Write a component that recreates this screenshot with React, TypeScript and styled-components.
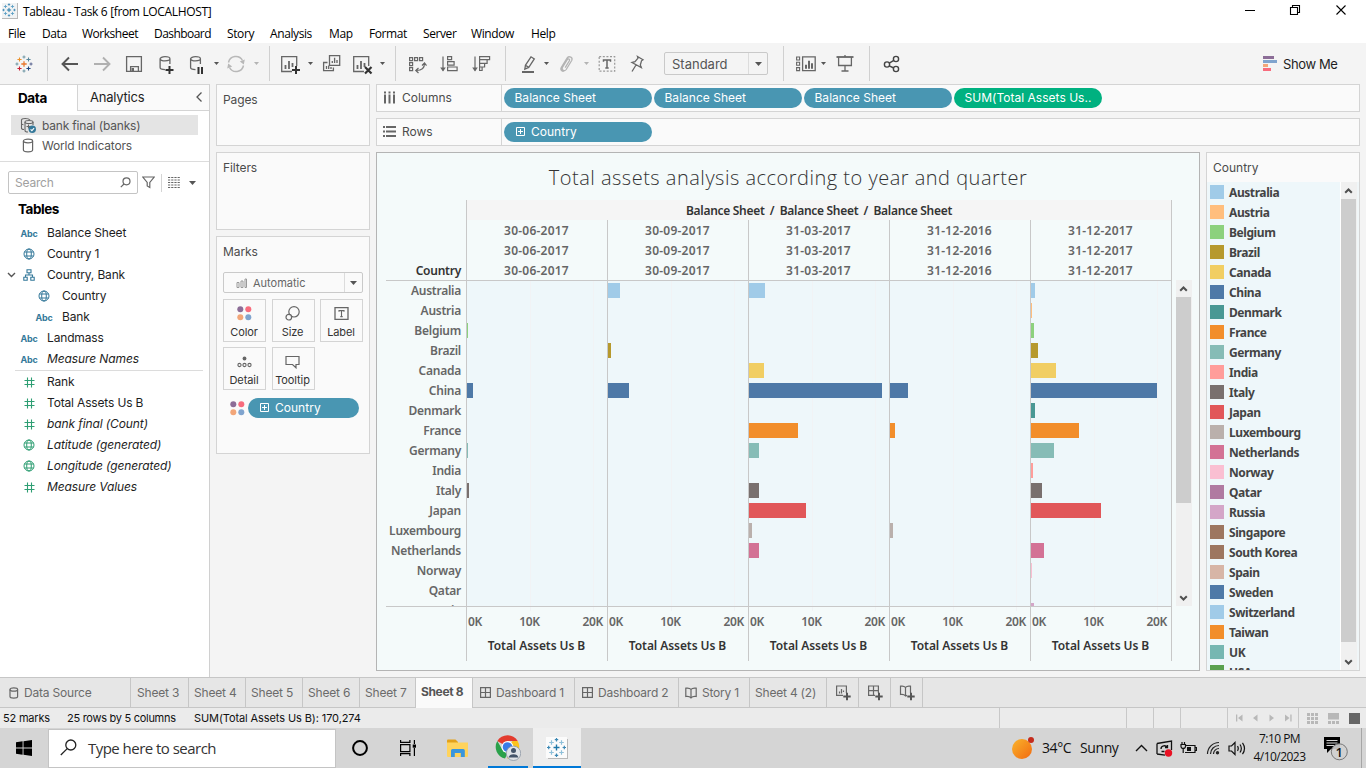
import React from 'react';
import styled, { createGlobalStyle, css } from 'styled-components';

const UI = '"Inter", "Liberation Sans", sans-serif';
const SEGOE = '"Open Sans", "Noto Sans", sans-serif';
const CHART = '"Noto Sans", "Open Sans", sans-serif';

const GlobalStyle = createGlobalStyle`
  * { box-sizing: border-box; }
  body { margin: 0; background: #f4f4f4; overflow: hidden; }
  svg { display: block; flex: none; }
`;

const Screen = styled.div`
  width: 1366px;
  height: 768px;
  display: flex;
  flex-direction: column;
  overflow: hidden;
  background: #f4f4f4;
  font-family: ${UI};
  font-size: 12px;
  color: #4b4b4b;
  white-space: pre;
`;

/* ---------- title bar and menu ---------- */

const TitleBar = styled.header`
  height: 23px;
  display: flex;
  align-items: center;
  padding-left: 2px;
  background: #fff;
  font-family: ${SEGOE};
  font-size: 12px;
  letter-spacing: -0.34px;
  color: #000;
`;

const AppBadge = styled.span`
  width: 16px;
  height: 16px;
  margin: -1px 5px 0 0;
  background: #f1f3f4;
  border-right: 1px solid #b9b9b9;
  border-bottom: 1px solid #b9b9b9;
`;

const WindowButtons = styled.div`
  display: flex;
  margin-left: auto;
  padding-right: 1px;
`;

const WindowButton = styled.div<{ $w: number }>`
  width: ${(p) => p.$w}px;
  height: 23px;
  padding-bottom: 3px;
  display: flex;
  align-items: center;
  justify-content: center;
`;

const MenuBar = styled.nav`
  height: 20px;
  display: flex;
  padding-left: 8px;
  background: #fff;
  font-family: ${SEGOE};
  font-size: 12px;
  line-height: 21px;
  color: #000;
`;

const MenuItem = styled.span<{ $w: number; $ls?: number }>`
  width: ${(p) => p.$w}px;
  letter-spacing: ${(p) => p.$ls ?? -0.4}px;
`;

/* ---------- toolbar ---------- */

const Toolbar = styled.div`
  height: 41px;
  display: flex;
  align-items: center;
  background: #f4f4f4;
`;

const Tool = styled.div<{ $w: number; $ml?: number }>`
  width: ${(p) => p.$w}px;
  margin-left: ${(p) => p.$ml ?? 0}px;
  flex: none;
  display: flex;
  justify-content: center;
`;

const ToolSeparator = styled.i<{ $ml?: number }>`
  width: 1px;
  height: 35px;
  margin-left: ${(p) => p.$ml ?? 0}px;
  background: #d0d0d0;
  flex: none;
`;

const FitSelect = styled.div`
  width: 104px;
  height: 23px;
  margin-left: 12px;
  display: flex;
  align-items: center;
  flex: none;
  border: 1px solid #c9c9c9;
  border-radius: 2px;
  padding-left: 7px;
  font-size: 13px;
  color: #555;
`;

const SelectArrow = styled.span<{ $w: number }>`
  width: ${(p) => p.$w}px;
  height: 100%;
  margin-left: auto;
  display: flex;
  align-items: center;
  justify-content: center;
  border-left: 1px solid #dcdcdc;
`;

const ShowMe = styled.div`
  margin-left: auto;
  width: 103px;
  display: flex;
  align-items: center;
  gap: 6px;
  font-size: 13px;
  letter-spacing: -0.4px;
  color: #1e1e1e;
`;

/* ---------- workspace ---------- */

const Workspace = styled.main`
  height: 593px;
  display: flex;
`;

const DataPane = styled.aside`
  width: 210px;
  display: flex;
  flex-direction: column;
  background: #fff;
  border-right: 1px solid #d0d0d0;
  border-top: 1px solid #d4d4d4;
  color: #1e1e1e;
`;

const PaneTabs = styled.div`
  display: flex;
  height: 26px;
  font-size: 13px;
`;

const PaneTab = styled.div<{ $active?: boolean }>`
  display: flex;
  align-items: center;
  ${(p) =>
    p.$active
      ? css`
          width: 77px;
          padding: 0 0 1px 18px;
          font-weight: 700;
          font-size: 13.5px;
          letter-spacing: -0.4px;
          color: #000;
        `
      : css`
          flex: 1;
          padding: 0 6px 1px 12px;
          letter-spacing: -0.22px;
          background: #fafafa;
          border-left: 1px solid #d4d4d4;
          border-bottom: 1px solid #d4d4d4;
          justify-content: space-between;
        `}
`;

const SourceList = styled.div`
  padding: 4px 11px 6px;
  border-bottom: 1px solid #dcdcdc;
`;

const Source = styled.div<{ $selected?: boolean }>`
  height: 20px;
  display: flex;
  align-items: center;
  gap: 6px;
  padding-left: 9px;
  letter-spacing: -0.18px;
  color: #555;
  background: ${(p) => (p.$selected ? '#e4e4e4' : 'transparent')};
`;

const SearchLine = styled.div`
  display: flex;
  align-items: center;
  margin: 9px 0 0 8px;
`;

const FieldSearch = styled.div`
  width: 130px;
  height: 23px;
  display: flex;
  align-items: center;
  justify-content: space-between;
  padding: 0 6px;
  border: 1px solid #c4c4c4;
  border-radius: 2px;
  color: #a0a0a0;
  letter-spacing: -0.2px;
`;

const SearchDivider = styled.i`
  width: 1px;
  height: 18px;
  margin: 0 6px;
  background: #d4d4d4;
`;

const TablesHeading = styled.h2`
  margin: 6px 0 3px 18px;
  font-size: 13.5px;
  line-height: 19px;
  letter-spacing: -0.45px;
  color: #000;
`;

const Field = styled.div<{ $nested?: boolean; $italic?: boolean }>`
  height: 21px;
  display: flex;
  align-items: center;
  padding-left: ${(p) => (p.$nested ? 20 : 5)}px;
  font-style: ${(p) => (p.$italic ? 'italic' : 'normal')};
  letter-spacing: ${(p) => (p.$italic ? -0.1 : -0.16)}px;
`;

const Expander = styled.span`
  width: 12px;
`;

const FieldIcon = styled.span<{ $measure?: boolean }>`
  width: 24px;
  margin-right: 6px;
  padding-top: 1px;
  display: flex;
  justify-content: center;
  font-style: normal;
  color: ${(p) => (p.$measure ? '#2e9e73' : '#35799a')};
`;

const AbcMark = styled.b`
  font-size: 9px;
  letter-spacing: -0.3px;
`;

const FieldDivider = styled.hr`
  width: 188px;
  height: 1px;
  margin: 1px 0 0 15px;
  border: 0;
  background: #dcdcdc;
`;

/* ---------- cards ---------- */

const CardColumn = styled.section`
  width: 154px;
  margin-left: 6px;
  display: flex;
  flex-direction: column;
  gap: 6px;
`;

const Card = styled.div<{ $h: number }>`
  height: ${(p) => p.$h}px;
  padding: 5px 6px;
  background: #fafafa;
  border: 1px solid #d4d4d4;
`;

const CardTitle = styled.div`
  line-height: 20px;
  letter-spacing: -0.1px;
`;

const MarkType = styled.div`
  width: 140px;
  height: 21px;
  margin-top: 10px;
  display: flex;
  align-items: center;
  padding-left: 12px;
  gap: 6px;
  border: 1px solid #cacaca;
  border-radius: 2px;
  font-size: 11px;
  color: #666;
`;

const MarkGrid = styled.div`
  display: grid;
  grid-template-columns: 43px 43px 43px;
  column-gap: 5.5px;
  row-gap: 5px;
  margin-top: 6px;
`;

const MarkButton = styled.div`
  height: 43px;
  display: flex;
  flex-direction: column;
  align-items: center;
  justify-content: space-between;
  padding: 6px 1px 1px 0;
  border: 1px solid #d4d4d4;
  font-size: 11px;
  line-height: 16px;
  letter-spacing: -0.1px;
  color: #333;
`;

const MarkPillRow = styled.div`
  display: flex;
  align-items: center;
  gap: 3px;
  margin: 8px 0 0 7px;
`;

const Pill = styled.div<{ $w: number; $measure?: boolean; $pad?: number }>`
  width: ${(p) => p.$w}px;
  height: 20px;
  flex: none;
  display: flex;
  align-items: center;
  gap: 6px;
  padding-left: ${(p) => p.$pad ?? 10.5}px;
  border-radius: 10px;
  background: ${(p) => (p.$measure ? '#00b180' : '#4996b2')};
  color: #fff;
  line-height: 14px;
  padding-bottom: 1px;
  letter-spacing: 0.02px;
`;

/* ---------- shelves, view, legend ---------- */

const ViewColumn = styled.section`
  width: 984px;
  margin-left: 6px;
  display: flex;
  flex-direction: column;
  gap: 6px;
`;

const Shelf = styled.div`
  height: 28px;
  flex: none;
  display: flex;
  align-items: center;
  gap: 2px;
  background: #fafafa;
  border: 1px solid #d4d4d4;
`;

const ShelfLabel = styled.div`
  width: 125px;
  height: 100%;
  display: flex;
  align-items: center;
  gap: 6px;
  padding: 0 0 1px 6px;
  border-right: 1px solid #d4d4d4;
`;

const ViewRow = styled.div`
  display: flex;
  gap: 6px;
  height: 519px;
`;

const Viz = styled.div`
  width: 824px;
  padding-left: 9px;
  background: #f4fafa;
  border: 1px solid #b4b4b4;
  font-family: ${CHART};
  font-weight: 600;
  color: #666;
`;

const VizTitle = styled.h1`
  height: 47px;
  margin: 0 0 0 -9px;
  font: 300 20px/50px "Open Sans", "Noto Sans", sans-serif;
  letter-spacing: 0.5px;
  text-align: center;
  color: #333;
`;

const ChartRow = styled.div`
  display: flex;
`;

const RowLabels = styled.div`
  width: 80px;
  padding-right: 5px;
  text-align: right;
  letter-spacing: -0.25px;
  line-height: 20px;
`;

const CornerLabel = styled(RowLabels)`
  padding-top: 61px;
  height: 80px;
  color: #333;
`;

const HeaderBlock = styled.div`
  width: 706px;
  border: solid #c8c8c8;
  border-width: 0 1px;
`;

const HeaderBand = styled.div`
  height: 20px;
  line-height: 21px;
  background: #f5f5f5;
  text-align: center;
  word-spacing: -0.2px;
  letter-spacing: -0.27px;
  color: #333;
`;

const Columns = styled.div`
  display: flex;
`;

const Column = styled.div`
  width: 141px;
  border-right: 1px solid #c8c8c8;
  &:last-child { width: 140px; border-right: 0; }
`;

const DateCell = styled.div`
  width: 139px;
  height: 20px;
  line-height: 22px;
  text-align: center;
  letter-spacing: 0.22px;
`;

const PlotRow = styled.div`
  display: flex;
  gap: 4px;
`;

const PlotFrame = styled.div`
  width: 786px;
  height: 327px;
  display: flex;
  overflow: hidden;
  border: solid #c8c8c8;
  border-width: 1px 0;
`;

const PlotBlock = styled.div`
  width: 706px;
  height: 325px;
  display: flex;
  border: solid #c8c8c8;
  border-width: 0 1px;
  background: #eef7fa;
`;

const gridlines = css`
  background-image: linear-gradient(#f1f3f5, #f1f3f5), linear-gradient(#f1f3f5, #f1f3f5);
  background-position: 63px 0, 126px 0;
  background-repeat: no-repeat;
`;

const PlotColumn = styled(Column)`
  height: 325px;
  padding-top: 2px;
  overflow: hidden;
  ${gridlines}
  background-size: 1px 100%;
`;

const BarSlot = styled.div`
  height: 20px;
`;

const Bar = styled.div<{ $color: string }>`
  height: 15px;
  background: ${(p) => p.$color};
`;

const Track = styled.div<{ $h: number }>`
  width: 16px;
  height: ${(p) => p.$h}px;
  flex: none;
  display: flex;
  flex-direction: column;
  justify-content: space-between;
  background: #f0f0f0;
`;

const TrackButton = styled.span`
  width: 15px;
  height: 17px;
  display: flex;
  align-items: center;
  justify-content: center;
`;

const Thumb = styled.span<{ $h: number }>`
  width: 15px;
  height: ${(p) => p.$h}px;
  margin-bottom: auto;
  background: #cdcdcd;
`;

const AxisColumn = styled(Column)`
  height: 54px;
  padding-top: 5px;
  ${gridlines}
  background-size: 1px 4px;
`;

const AxisTicks = styled.div`
  width: 140px;
  display: grid;
  grid-template-columns: 31px 63px 45px;
  line-height: 20px;
  letter-spacing: -0.3px;
  span:first-child { padding-left: 1px; }
  span:nth-child(2) { text-align: center; }
  span:last-child { text-align: right; padding-right: 3px; }
`;

const AxisTitle = styled.div`
  width: 139px;
  margin-top: 4px;
  text-align: center;
  line-height: 20px;
  letter-spacing: -0.07px;
  color: #333;
`;

const Legend = styled.aside`
  width: 154px;
  overflow: hidden;
  background: #fafafa;
  border: 1px solid #d4d4d4;
`;

const LegendTitle = styled.div`
  height: 29px;
  padding-left: 6px;
  line-height: 30px;
`;

const LegendBody = styled.div`
  display: flex;
  height: 488px;
  background: #f0f6f8;
`;

const LegendList = styled.div`
  width: 134px;
  overflow: hidden;
  background: #eef7fa;
  border-right: 1px solid #fff;
  padding-left: 3px;
`;

const LegendItem = styled.div`
  height: 20px;
  display: flex;
  align-items: center;
  gap: 5px;
  font: 700 12px/20px ${CHART};
  letter-spacing: -0.42px;
  color: #444;
`;

const LegendName = styled.span`
  padding-top: 2px;
`;

const Swatch = styled.i<{ $color: string }>`
  width: 14px;
  height: 14px;
  background: ${(p) => p.$color};
`;

/* ---------- sheet tabs and status ---------- */

const SheetTabs = styled.div`
  height: 31px;
  display: flex;
  background: #e6e6e6;
  border: solid #c6c6c6;
  border-width: 1px 0;
`;

const SheetTab = styled.div<{ $w: number; $active?: boolean; $pad?: number }>`
  width: ${(p) => p.$w}px;
  height: ${(p) => (p.$active ? 30 : 29)}px;
  display: flex;
  align-items: center;
  gap: 5px;
  padding-left: ${(p) => p.$pad ?? 6}px;
  border-right: 1px solid #c6c6c6;
  letter-spacing: -0.2px;
  color: #6b6b6b;
  ${(p) =>
    p.$active &&
    css`
      background: #fafafa;
      font-weight: 700;
      letter-spacing: -0.36px;
      padding-bottom: 3px;
      color: #555;
    `}
`;

const StatusBar = styled.div`
  height: 20px;
  display: flex;
  align-items: center;
  padding-left: 3px;
  background: #ebebeb;
  font-size: 11px;
  color: #111;
`;

const StatusText = styled.span<{ $w: number; $ls: number }>`
  width: ${(p) => p.$w}px;
  letter-spacing: ${(p) => p.$ls}px;
`;

const StatusCell = styled.div<{ $w: number }>`
  width: ${(p) => p.$w}px;
  height: 100%;
  display: flex;
  align-items: center;
  border-left: 1px solid #c8c8c8;
`;

/* ---------- taskbar ---------- */

const Taskbar = styled.footer`
  height: 40px;
  display: flex;
  align-items: center;
  background: #d5d5d5;
  font-family: ${SEGOE};
  color: #111;
`;

const TaskItem = styled.div<{ $w: number; $ml?: number; $active?: boolean; $open?: boolean }>`
  width: ${(p) => p.$w}px;
  height: 40px;
  flex: none;
  margin-left: ${(p) => p.$ml ?? 0}px;
  display: flex;
  align-items: center;
  justify-content: center;
  background: ${(p) => (p.$active ? '#eeeeee' : 'transparent')};
  box-shadow: ${(p) => (p.$open ? 'inset 0 -2px 0 #0078d7' : 'none')};
`;

const TaskSearch = styled.div`
  width: 288px;
  height: 39px;
  margin-top: 1px;
  display: flex;
  align-items: center;
  gap: 11px;
  padding: 0 0 2px 11px;
  background: #fff;
  border: 1px solid #c4c4c4;
  font-size: 15px;
  letter-spacing: -0.53px;
  color: #333;
`;

const Weather = styled.div`
  margin-left: auto;
  display: flex;
  align-items: center;
  width: 119px;
  padding-bottom: 1px;
  font-size: 14px;
  letter-spacing: -0.4px;
`;

const Temperature = styled.span`
  width: 38px;
  margin-left: 7px;
`;

const Clock = styled.div`
  width: 63px;
  margin-left: 0;
  font-size: 12px;
  line-height: 18px;
  letter-spacing: -0.53px;
  text-align: center;
`;

const DesktopEdge = styled.i`
  width: 5px;
  height: 40px;
  border-left: 1px solid #a6a6a6;
`;

/* ---------- icons ---------- */

const Glyph = ({ size = 24, w, h, children, ...rest }: any) => (
  <svg
    width={w ?? size}
    height={h ?? size}
    viewBox={`0 0 ${w ?? size} ${h ?? size}`}
    fill="none"
    stroke="#666"
    strokeWidth="1.3"
    {...rest}
  >
    {children}
  </svg>
);

const plus = (x: number, y: number, r: number) => `M${x - r} ${y}h${2 * r}M${x} ${y - r}v${2 * r}`;

const TableauMark = ({ size, colors }: { size: number; colors: string[] }) => (
  <svg width={size} height={size} viewBox="0 0 20 20" fill="none" strokeWidth="1.2">
    <path stroke={colors[0]} strokeWidth="1.4" d={plus(10, 10, 3)} />
    <path stroke={colors[1]} d={plus(5, 5, 2.3)} />
    <path stroke={colors[2]} d={plus(15, 5, 2.3)} />
    <path stroke={colors[3]} d={plus(5, 15, 2.3)} />
    <path stroke={colors[4]} d={plus(15, 15, 2.3)} />
    <path stroke={colors[5]} d={plus(10, 2.2, 1.7)} />
    <path stroke={colors[6]} d={plus(2.2, 10, 1.7)} />
    <path stroke={colors[5]} d={plus(10, 17.8, 1.7)} />
    <path stroke={colors[7]} d={plus(17.8, 10, 1.7)} />
  </svg>
);

const BRAND = ['#e8762d', '#eb912b', '#59879b', '#c72035', '#1f447e', '#7199a6', '#7199a6', '#5c6692'];
const BLUES = ['#1f77a8', '#5a9fc4', '#5a9fc4', '#5a9fc4', '#5a9fc4', '#3b88b4', '#3b88b4', '#3b88b4'];
const PALE_BLUES = ['#1f77a8', '#8dbfd9', '#8dbfd9', '#8dbfd9', '#8dbfd9', '#3b88b4', '#3b88b4', '#3b88b4'];

const Caret = ({ light, big }: { light?: boolean; big?: boolean }) => (
  <svg width={big ? 7 : 5} height={big ? 4 : 3} viewBox="0 0 6 3" preserveAspectRatio="none">
    <path d="M0 0h6L3 3z" fill={light ? '#b4b4b4' : '#555'} />
  </svg>
);

const Cylinder = ({ x = 0, y = 0 }: { x?: number; y?: number }) => (
  <path
    transform={`translate(${x} ${y})`}
    d="M.6 2.8C.6 1.6 2.8.7 5.5.7s4.9.9 4.9 2.1-2.200 2.100-4.900 2.100S.6 4 .6 2.800V11.500c0 1.200 2.200 2.100 4.900 2.100M10.400 2.800V8"
  />
);

const DataPlus = () => (
  <Glyph>
    <Cylinder x={5.5} y={4} />
    <path stroke="#333" strokeWidth="2" d={plus(15.5, 18, 4)} />
  </Glyph>
);

const DataPause = () => (
  <Glyph>
    <Cylinder x={6} y={4} />
    <path stroke="#333" strokeWidth="2" d="M14.500 15v7M18 15v7" />
  </Glyph>
);

const ChartFrame = () => (
  <>
    <path d="M14 19.500H3.700V4.700h15V14" />
    <path strokeWidth="1.800" d="M7.500 17v-4M11 17V9M14.500 15v-4" />
  </>
);

const NewSheet = () => (
  <Glyph>
    <ChartFrame />
    <path stroke="#333" strokeWidth="2" d={plus(18, 18, 4)} />
  </Glyph>
);

const ClearSheet = () => (
  <Glyph>
    <ChartFrame />
    <path stroke="#333" strokeWidth="2.200" d="M15 15l6.500 6.500M21.500 15L15 21.500" />
  </Glyph>
);

const DuplicateSheet = () => (
  <Glyph>
    <path d="M9.500 3.600h10.200v9.800H9.500zM7.500 10.500H3.600v8.200h9.800V15.500" />
    <path d="M12.300 11V9M14.600 11V5.800M17 11V8M6.500 17v-3M8.700 17v-3.500M11 17v-2" />
  </Glyph>
);

const Swap = () => (
  <Glyph strokeWidth="1.200">
    <path d="M4.600 5.600h3v3h-3zM9.600 5.600h3v3h-3zM14.600 5.600h3v3h-3zM4.600 10.600h3v3h-3zM4.600 15.600h3v3h-3z" />
    <path d="M19.500 11.500c0 4-2.500 7-8 7M17 13.500l2.500-2.500 2 2.700M13.500 16l-2.700 2.500 2.700 2.500" />
  </Glyph>
);

const Sort = ({ desc }: { desc?: boolean }) => (
  <Glyph strokeWidth="1.200">
    <path d="M5 4.500v14" />
    <path d="M2.200 15.500h5.600L5 19.500z" fill="#666" stroke="none" />
    {desc ? (
      <path d="M9.600 4.600h10v3h-10zM9.600 7.600h7.500v3.700H9.600zM9.600 11.300h5v3.700h-5zM9.600 15h2.500v3.500H9.600z" />
    ) : (
      <path d="M9.600 4.600h4v3h-4zM9.600 9.600h6.500v3.500H9.600zM9.600 15h9.500v3.600H9.600z" />
    )}
  </Glyph>
);

const Highlighter = () => (
  <Glyph>
    <path d="M9.500 13.200L15 4.800l3.300 2.100-5.500 8.500zM9.500 13.200l-.7 4 4-1.800" />
    <path strokeWidth="2" d="M6 20h12" />
  </Glyph>
);

const Clip = () => (
  <Glyph stroke="#b4b4b4">
    <path d="M7.200 15.500l6-9.500c2-2.500 6-.5 4.500 2.500l-5.500 9c-1.500 2.200-5 .800-3.800-2l5-8c1-1.200 2.800-.2 2 1.200l-4.200 7M7.200 15.500c-1.200 2 .5 4.500 3 3.500" />
  </Glyph>
);

const TextFrame = () => (
  <Glyph>
    <rect x="4.200" y="4.700" width="15.500" height="14.500" stroke="#999" strokeDasharray="2 1.600" strokeWidth="1.200" />
    <path d="M8.500 9.800V8h7v1.800M12 8v8M10.300 16h3.400" strokeWidth="1.500" />
  </Glyph>
);

const Pin = () => (
  <Glyph>
    <path d="M12.500 4.500l5.500 3.300-1.500 1-1.200 4.200 1 2.500-9.300-5 3-.8 3-3.500zM11 13l-4 6.500" />
  </Glyph>
);

const FitCards = () => (
  <Glyph>
    <path strokeWidth="1.100" d="M2.600 5h3v3h-3zM2.600 10.300h3v3h-3zM2.600 15.600h3v3h-3z" />
    <path d="M8.600 4.900h12.600v13.800H8.600z" />
    <path strokeWidth="2" d="M12 16.800v-4M15 16.800V8.800M18 16.800v-5.500" />
  </Glyph>
);

const Presentation = () => (
  <Glyph>
    <path strokeWidth="1.800" d="M3.500 5h17" />
    <path d="M5.600 5v8.500h12.800V5M12 3v2M12 13.500v5.500M8.500 19h7" />
  </Glyph>
);

const Share = () => (
  <Glyph stroke="#444" strokeWidth="1.400">
    <circle cx="7" cy="12.500" r="2.600" />
    <circle cx="16" cy="7" r="2.600" />
    <circle cx="16" cy="17" r="2.600" />
    <path d="M9.300 11.200l4.500-2.800M9.200 13.800l4.600 2.200" />
  </Glyph>
);

const ShowMeIcon = () => (
  <svg width="14" height="16" viewBox="0 0 14 16">
    <path fill="#8c6d97" d="M0 0h11v3H0z" />
    <path fill="#80a4ce" d="M0 4h14v3H0z" />
    <path fill="#f2a679" d="M0 8h5v3H0z" />
    <path fill="#f86c7d" d="M0 12h8v3H0z" />
  </svg>
);

const GlobeIcon = () => (
  <Glyph size={12} stroke="currentColor" strokeWidth="1">
    <circle cx="6" cy="6" r="5" />
    <ellipse cx="6" cy="6" rx="2.300" ry="5" />
    <path d="M1.500 4h9M1.500 8h9" />
  </Glyph>
);

const HashIcon = () => (
  <Glyph size={11} stroke="currentColor" strokeWidth="1.100">
    <path d="M3.500.5v10M7.500.5v10M.5 3.500h10M.5 7.500h10" />
  </Glyph>
);

const HierarchyIcon = () => (
  <Glyph size={12} stroke="currentColor" strokeWidth="1.100">
    <path d="M4 .8h4v3H4zM.800 8.300h3.400v2.900H.8zM7.800 8.300h3.400v2.900H7.800zM6 3.800V6M2.500 8.300V6h7v2.300" />
  </Glyph>
);

const ColorDots = () => (
  <svg width="15" height="15" viewBox="0 0 15 15">
    <circle cx="3.300" cy="3.300" r="3" fill="#8c6d97" />
    <circle cx="11.300" cy="3.300" r="3" fill="#f86c7d" />
    <circle cx="3.300" cy="11.300" r="3" fill="#f2a679" />
    <circle cx="11.300" cy="11.300" r="3" fill="#80a4ce" />
  </svg>
);

const SizeIcon = () => (
  <Glyph size={15} strokeWidth="1.200">
    <circle cx="9" cy="5.800" r="5.200" />
    <circle cx="3.800" cy="11.200" r="2.800" fill="#fafafa" />
  </Glyph>
);

const LabelIcon = () => (
  <Glyph size={15}>
    <path d="M1 1.700h13v11.600H1z" />
    <path strokeWidth="1.100" d="M5 5.800V4.600h5v1.200M7.500 4.600v6M6.300 10.600h2.400" />
  </Glyph>
);

const DetailIcon = () => (
  <Glyph size={15} strokeWidth="1.100">
    <circle cx="7.500" cy="4.500" r="1.900" fill="#666" stroke="none" />
    <circle cx="2.500" cy="11" r="1.600" />
    <circle cx="7.500" cy="11" r="1.600" />
    <circle cx="12.500" cy="11" r="1.600" />
  </Glyph>
);

const TooltipIcon = () => (
  <Glyph size={15} strokeWidth="1.200">
    <path d="M1 2.500h13v8h-3v3.300l-3.500-3.300H1z" />
  </Glyph>
);

const ExpandBox = () => (
  <Glyph size={9} stroke="#fff" strokeWidth="1">
    <path d="M.5.5h8v8h-8zM2 4.500h5M4.500 2v5" />
  </Glyph>
);

const DatabaseSmall = () => (
  <Glyph w={16} h={15} strokeWidth="1.200">
    <ellipse cx="8" cy="3" rx="4.600" ry="1.800" />
    <path d="M3.400 3v9c0 2.400 9.200 2.400 9.200 0V3" />
  </Glyph>
);

const PublishedSource = () => (
  <Glyph w={16} h={16} strokeWidth="1.100">
    <path d="M1.500 3c0-2 7-2 8.500 0M1.500 3v8c0 1 1.500 1.500 2.500 1.500M1.500 6.500c0 .8 1 1.200 2 1.200" />
    <ellipse cx="9" cy="5" rx="4" ry="1.500" />
    <path d="M5 5v8.500c0 1 2 1.500 3 1.500M13 5v3M6.500 9.500h4M8.500 7.500v4" />
    <circle cx="12.300" cy="12.300" r="3.700" fill="#35799a" stroke="none" />
    <path stroke="#fff" d="M10.600 12.400l1.300 1.300 2.200-2.500" />
  </Glyph>
);

const DashboardIcon = () => (
  <Glyph size={11} strokeWidth="1.200">
    <path d="M.6.600h9.800v9.800H.6zM5.500.6v9.800M.6 5.500h9.800" />
  </Glyph>
);

const StoryIcon = () => (
  <Glyph size={12} strokeWidth="1.200">
    <path d="M.8 1.200C3 .8 5 1.300 6 2.400 7 1.300 9 .8 11.200 1.200v8.300C9 9.200 7 9.700 6 11 5 9.700 3 9.200.8 9.500zM6 2.400V11" />
  </Glyph>
);

const AddSheet = ({ kind }: { kind: string }) => (
  <Glyph w={16} h={16} strokeWidth="1.200">
    {kind === 'sheet' && <path d="M8 10.400H1.600V1h9.800v7M4.500 8.500V6.500M6.500 8.500V4M8.500 7V5.500" />}
    {kind === 'dashboard' && <path d="M8 10.400H1.600V1h9.800v7M6.500 1v9.400M1.600 5.700h9.800" />}
    {kind === 'story' && <path d="M8 10.400L6.500 11C5.500 9.700 3.500 9.200 1.500 9.500V1.200c2-.4 4 .1 5 1.200 1-1.100 3-1.600 5-1.200V8M6.500 2.400V11" />}
    <path stroke="#555" strokeWidth="2" d={plus(12, 11.500, 3.700)} />
  </Glyph>
);

const ScrollArrow = ({ down }: { down?: boolean }) => (
  <svg width="9" height="6" viewBox="0 0 9 6" fill="none" stroke="#505050" strokeWidth="2">
    <path d={down ? 'M1.200 1.200L4.500 4.500 7.800 1.200' : 'M1.200 4.800L4.500 1.500 7.800 4.800'} />
  </svg>
);

/* ---------- data ---------- */

const COLORS: Record<string, string> = {
  Australia: '#a0cbe8', Austria: '#ffbe7d', Belgium: '#8cd17d', Brazil: '#b6992d',
  Canada: '#f1ce63', China: '#4e79a7', Denmark: '#499894', France: '#f28e2b',
  Germany: '#86bcb6', India: '#ff9d9a', Italy: '#79706e', Japan: '#e15759',
  Luxembourg: '#bab0ac', Netherlands: '#d37295', Norway: '#fabfd2', Qatar: '#b07aa1',
  Russia: '#d4a6c8', Singapore: '#9d7660', 'South Korea': '#9d7660', Spain: '#d7b5a6',
  Sweden: '#4e79a7', Switzerland: '#a0cbe8', Taiwan: '#f28e2b', UK: '#76b7b2', USA: '#59a14f',
};
const COUNTRIES = Object.keys(COLORS);
const ROWS = COUNTRIES.slice(0, 17);

const SERIES: { date: string; bars: Record<string, number> }[] = [
  { date: '30-06-2017', bars: { Belgium: 1, China: 6, Germany: 1, Italy: 2 } },
  { date: '30-09-2017', bars: { Australia: 12, Brazil: 3, China: 21 } },
  { date: '31-03-2017', bars: { Australia: 16, Canada: 15, China: 133, France: 49, Germany: 10, Italy: 10, Japan: 57, Luxembourg: 3, Netherlands: 10 } },
  { date: '31-12-2016', bars: { China: 18, France: 5, Luxembourg: 3 } },
  { date: '31-12-2017', bars: { Australia: 4, Austria: 1, Belgium: 3, Brazil: 7, Canada: 25, China: 126, Denmark: 4, France: 48, Germany: 23, India: 2, Italy: 11, Japan: 70, Netherlands: 13, Norway: 1, Russia: 3 } },
];

const MENU: [string, number, number?][] = [
  ['File', 34], ['Data', 40], ['Worksheet', 72, -0.48], ['Dashboard', 73, -0.55], ['Story', 43],
  ['Analysis', 59], ['Map', 40], ['Format', 54], ['Server', 48], ['Window', 60], ['Help', 40],
];

type FieldKind = 'abc' | 'globe' | 'hash' | 'tree';
const DIMENSIONS: { name: string; kind: FieldKind; nested?: boolean; italic?: boolean }[] = [
  { name: 'Balance Sheet', kind: 'abc' },
  { name: 'Country 1', kind: 'globe' },
  { name: 'Country, Bank', kind: 'tree' },
  { name: 'Country', kind: 'globe', nested: true },
  { name: 'Bank', kind: 'abc', nested: true },
  { name: 'Landmass', kind: 'abc' },
  { name: 'Measure Names', kind: 'abc', italic: true },
];
const MEASURES: typeof DIMENSIONS = [
  { name: 'Rank', kind: 'hash' },
  { name: 'Total Assets Us B', kind: 'hash' },
  { name: 'bank final (Count)', kind: 'hash', italic: true },
  { name: 'Latitude (generated)', kind: 'globe', italic: true },
  { name: 'Longitude (generated)', kind: 'globe', italic: true },
  { name: 'Measure Values', kind: 'hash', italic: true },
];

const fieldIcons = {
  abc: <AbcMark>Abc</AbcMark>,
  globe: <GlobeIcon />,
  hash: <HashIcon />,
  tree: <HierarchyIcon />,
};

const FieldRow = ({ field, measure }: { field: (typeof DIMENSIONS)[number]; measure?: boolean }) => (
  <Field $nested={field.nested} $italic={field.italic}>
    <Expander>
      {field.kind === 'tree' && (
        <Glyph w={12} h={8} stroke="#555" strokeWidth="1.400"><path d="M3 2l3.500 3.500L10 2" /></Glyph>
      )}
    </Expander>
    <FieldIcon $measure={measure}>{fieldIcons[field.kind]}</FieldIcon>
    {field.name}
  </Field>
);

const VerticalScroll = ({ h, thumb }: { h: number; thumb: number }) => (
  <Track $h={h}>
    <TrackButton><ScrollArrow /></TrackButton>
    <Thumb $h={thumb} />
    <TrackButton><ScrollArrow down /></TrackButton>
  </Track>
);

/* ---------- page ---------- */

const TopBars = () => (
  <>
    <TitleBar>
      <AppBadge><TableauMark size={14} colors={BLUES} /></AppBadge>
      Tableau - Task 6 [from LOCALHOST]
      <WindowButtons>
        <WindowButton $w={46}><Glyph size={12} stroke="#000" strokeWidth="1"><path d="M1 6.500h10" /></Glyph></WindowButton>
        <WindowButton $w={44}>
          <Glyph size={12} stroke="#000" strokeWidth="1.100"><path d="M1.500 3.500h7v7h-7zM3.500 3.500v-2h7v7h-2" /></Glyph>
        </WindowButton>
        <WindowButton $w={48}>
          <Glyph size={12} stroke="#000" strokeWidth="1.100"><path d="M1.500 1.500l9 9M10.500 1.500l-9 9" /></Glyph>
        </WindowButton>
      </WindowButtons>
    </TitleBar>
    <MenuBar>
      {MENU.map(([name, w, ls]) => <MenuItem key={name} $w={w} $ls={ls}>{name}</MenuItem>)}
    </MenuBar>
    <Toolbar>
      <Tool $w={47}><TableauMark size={18} colors={BRAND} /></Tool>
      <ToolSeparator />
      <Tool $w={28} $ml={8}><Glyph stroke="#555" strokeWidth="1.900"><path d="M20 12H5M11 5.500L4.500 12l6.500 6.500" /></Glyph></Tool>
      <Tool $w={36}><Glyph stroke="#b0b0b0" strokeWidth="1.900"><path d="M4 12h15M13 5.500l6.500 6.500-6.500 6.500" /></Glyph></Tool>
      <Tool $w={28}>
        <Glyph><path d="M4.600 4.600h14.800v14.800H4.600zM8.600 19.400v-4.800h7.800v4.800" /><path fill="#666" stroke="none" d="M9.500 16h2.500v3H9.500z" /></Glyph>
      </Tool>
      <Tool $w={35}><DataPlus /></Tool>
      <Tool $w={26}><DataPause /></Tool>
      <Tool $w={14}><Caret /></Tool>
      <Tool $w={26}>
        <Glyph stroke="#b8b8b8" strokeWidth="1.500">
          <path d="M4.500 10.500A7.500 7.500 0 0 1 18.500 8.500M19.500 13.500A7.500 7.500 0 0 1 5.500 15.500" />
          <path d="M20.800 7.500l-1 5-4-3zM3.200 16.500l1-5 4 3z" fill="#b8b8b8" stroke="none" />
        </Glyph>
      </Tool>
      <Tool $w={14}><Caret light /></Tool>
      <ToolSeparator $ml={6} />
      <Tool $w={28} $ml={6}><NewSheet /></Tool>
      <Tool $w={13}><Caret /></Tool>
      <Tool $w={30}><DuplicateSheet /></Tool>
      <Tool $w={30}><ClearSheet /></Tool>
      <Tool $w={10}><Caret /></Tool>
      <ToolSeparator $ml={8} />
      <Tool $w={32} $ml={5}><Swap /></Tool>
      <Tool $w={34}><Sort /></Tool>
      <Tool $w={30}><Sort desc /></Tool>
      <ToolSeparator $ml={8} />
      <Tool $w={27} $ml={8}><Highlighter /></Tool>
      <Tool $w={11}><Caret /></Tool>
      <Tool $w={28}><Clip /></Tool>
      <Tool $w={12}><Caret light /></Tool>
      <Tool $w={30}><TextFrame /></Tool>
      <Tool $w={30}><Pin /></Tool>
      <FitSelect>Standard<SelectArrow $w={19}><Caret big /></SelectArrow></FitSelect>
      <ToolSeparator $ml={15} />
      <Tool $w={28} $ml={8}><FitCards /></Tool>
      <Tool $w={7}><Caret /></Tool>
      <Tool $w={36}><Presentation /></Tool>
      <ToolSeparator $ml={6} />
      <Tool $w={28} $ml={8}><Share /></Tool>
      <ShowMe><ShowMeIcon />Show Me</ShowMe>
    </Toolbar>
  </>
);

const DataPanel = () => (
  <DataPane>
    <PaneTabs>
      <PaneTab $active>Data</PaneTab>
      <PaneTab>
        Analytics
        <Glyph w={8} h={12} stroke="#555"><path d="M6.500 1.500L2 6l4.500 4.500" /></Glyph>
      </PaneTab>
    </PaneTabs>
    <SourceList>
      <Source $selected><PublishedSource />bank final (banks)</Source>
      <Source><DatabaseSmall />World Indicators</Source>
    </SourceList>
    <SearchLine>
      <FieldSearch>
        Search
        <Glyph size={11} strokeWidth="1.200"><circle cx="6.500" cy="4.300" r="3.500" /><path d="M4 7L.8 10.200" /></Glyph>
      </FieldSearch>
      <Tool $w={13} $ml={4}><Glyph size={13}><path d="M.8 1h11.400L7.800 6.500v5L5.200 10V6.500z" strokeWidth="1.200" /></Glyph></Tool>
      <SearchDivider />
      <Glyph w={12} h={11} strokeWidth="1"><path strokeDasharray="2.200 1" d="M0 .5h12M0 3h12M0 5.500h12M0 8h12M0 10.500h12" /></Glyph>
      <Tool $w={7} $ml={9}><Caret big /></Tool>
    </SearchLine>
    <TablesHeading>Tables</TablesHeading>
    {DIMENSIONS.map((f) => <FieldRow key={f.name} field={f} />)}
    <FieldDivider />
    {MEASURES.map((f) => <FieldRow key={f.name} field={f} measure />)}
  </DataPane>
);

const Cards = () => (
  <CardColumn>
    <Card $h={62}><CardTitle>Pages</CardTitle></Card>
    <Card $h={78}><CardTitle>Filters</CardTitle></Card>
    <Card $h={218}>
      <CardTitle>Marks</CardTitle>
      <MarkType>
        <Glyph w={11} h={10} stroke="#999" strokeWidth="1"><path d="M1 4.500h2v5H1zM5 3h2v6.500H5zM9 1h1.500v8.500H9z" /></Glyph>
        Automatic
        <SelectArrow $w={18}><Caret big /></SelectArrow>
      </MarkType>
      <MarkGrid>
        <MarkButton><ColorDots />Color</MarkButton>
        <MarkButton><SizeIcon />Size</MarkButton>
        <MarkButton><LabelIcon />Label</MarkButton>
        <MarkButton><DetailIcon />Detail</MarkButton>
        <MarkButton><TooltipIcon />Tooltip</MarkButton>
      </MarkGrid>
      <MarkPillRow>
        <ColorDots />
        <Pill $w={111} $pad={12}><ExpandBox />Country</Pill>
      </MarkPillRow>
    </Card>
  </CardColumn>
);

const Chart = () => (
  <Viz>
    <VizTitle>Total assets analysis according to year and quarter</VizTitle>
    <ChartRow>
      <CornerLabel>Country</CornerLabel>
      <HeaderBlock>
        <HeaderBand>Balance Sheet  /  Balance Sheet  /  Balance Sheet</HeaderBand>
        <Columns>
          {SERIES.map((s) => (
            <Column key={s.date}>
              <DateCell>{s.date}</DateCell>
              <DateCell>{s.date}</DateCell>
              <DateCell>{s.date}</DateCell>
            </Column>
          ))}
        </Columns>
      </HeaderBlock>
    </ChartRow>
    <PlotRow>
      <PlotFrame>
        <RowLabels>{ROWS.map((c) => <div key={c}>{c}</div>)}</RowLabels>
        <PlotBlock>
          {SERIES.map((s) => (
            <PlotColumn key={s.date}>
              {ROWS.map((c) => (
                <BarSlot key={c}>
                  {s.bars[c] && <Bar $color={COLORS[c]} style={{ width: s.bars[c] }} />}
                </BarSlot>
              ))}
            </PlotColumn>
          ))}
        </PlotBlock>
      </PlotFrame>
      <VerticalScroll h={326} thumb={206} />
    </PlotRow>
    <ChartRow>
      <RowLabels />
      <HeaderBlock>
        <Columns>
          {SERIES.map((s) => (
            <AxisColumn key={s.date}>
              <AxisTicks><span>0K</span><span>10K</span><span>20K</span></AxisTicks>
              <AxisTitle>Total Assets Us B</AxisTitle>
            </AxisColumn>
          ))}
        </Columns>
      </HeaderBlock>
    </ChartRow>
  </Viz>
);

const ViewArea = () => (
  <ViewColumn>
    <Shelf>
      <ShelfLabel>
        <Glyph size={13} strokeWidth="2"><path strokeDasharray="2 1 9" d="M2 .5v12M6.500.5v12M11 .5v12" /></Glyph>
        Columns
      </ShelfLabel>
      <Pill $w={148}>Balance Sheet</Pill>
      <Pill $w={148}>Balance Sheet</Pill>
      <Pill $w={148}>Balance Sheet</Pill>
      <Pill $w={148} $measure>SUM(Total Assets Us..</Pill>
    </Shelf>
    <Shelf>
      <ShelfLabel>
        <Glyph size={13} strokeWidth="2"><path strokeDasharray="2 1 10" d="M0 2h13M0 6.500h13M0 11h13" /></Glyph>
        Rows
      </ShelfLabel>
      <Pill $w={148} $pad={12}><ExpandBox />Country</Pill>
    </Shelf>
    <ViewRow>
      <Chart />
      <Legend>
        <LegendTitle>Country</LegendTitle>
        <LegendBody>
          <LegendList>
            {COUNTRIES.map((c) => (
              <LegendItem key={c}><Swatch $color={COLORS[c]} /><LegendName>{c}</LegendName></LegendItem>
            ))}
          </LegendList>
          <VerticalScroll h={488} thumb={443} />
        </LegendBody>
      </Legend>
    </ViewRow>
  </ViewColumn>
);

const BottomBars = () => (
  <>
    <SheetTabs>
      <SheetTab $w={131} $pad={9}>
        <Glyph w={10} h={12} strokeWidth="1.200"><ellipse cx="4.800" cy="2.500" rx="3.800" ry="1.700" /><path d="M1 2.500v7.300c0 1.700 7.600 1.700 7.600 0V2.500" /></Glyph>
        Data Source
      </SheetTab>
      <SheetTab $w={58}>Sheet 3</SheetTab>
      <SheetTab $w={57} $pad={5}>Sheet 4</SheetTab>
      <SheetTab $w={57} $pad={5}>Sheet 5</SheetTab>
      <SheetTab $w={57} $pad={5}>Sheet 6</SheetTab>
      <SheetTab $w={56} $pad={5}>Sheet 7</SheetTab>
      <SheetTab $w={57} $pad={5} $active>Sheet 8</SheetTab>
      <SheetTab $w={102} $pad={7}><DashboardIcon />Dashboard 1</SheetTab>
      <SheetTab $w={104} $pad={7}><DashboardIcon />Dashboard 2</SheetTab>
      <SheetTab $w={71}><StoryIcon />Story 1</SheetTab>
      <SheetTab $w={77} $pad={5}>Sheet 4 (2)</SheetTab>
      <SheetTab $w={32} $pad={8}><AddSheet kind="sheet" /></SheetTab>
      <SheetTab $w={32} $pad={8}><AddSheet kind="dashboard" /></SheetTab>
      <SheetTab $w={32} $pad={8}><AddSheet kind="story" /></SheetTab>
    </SheetTabs>
    <StatusBar>
      <StatusText $w={64} $ls={-0.2}>52 marks</StatusText>
      <StatusText $w={127} $ls={-0.28}>25 rows by 5 columns</StatusText>
      <StatusText $w={805} $ls={-0.1}>SUM(Total Assets Us B): 170,274</StatusText>
      <StatusCell $w={127} />
      <StatusCell $w={27} />
      <StatusCell $w={27} />
      <StatusCell $w={47} />
      <StatusCell $w={71}>
        <Glyph w={70} h={8} stroke="none" fill="#b8b8b8">
          <path d="M8 .5h1.300v7H8zM14.500.5v7L10 4zM29.500.5v7L25 4zM41.500.5v7L46 4zM57 .5v7L61.500 4zM62.300.5h1.300v7h-1.300z" />
        </Glyph>
      </StatusCell>
      <StatusCell $w={68}>
        <Glyph w={66} h={11} stroke="none" fill="#b8b8b8">
          <path d="M8 0h3v3H8zM12 0h3v3h-3zM16 0h3v3h-3zM8 4h3v3H8zM12 4h3v3h-3zM16 4h3v3h-3zM8 8h3v3H8zM12 8h3v3h-3zM16 8h3v3h-3z" />
          <path d="M29 0h11v6.500H29zM29 8h3v3h-3zM33 8h3v3h-3zM37 8h3v3h-3z" />
          <path fill="#666" d="M50 0h11v11H50z" />
        </Glyph>
      </StatusCell>
    </StatusBar>
    <Taskbar>
      <TaskItem $w={48}>
        <svg width="16" height="16" viewBox="0 0 16 16" fill="#000"><path d="M0 2.200l6.600-.9v6.200H0zM7.500 1.200L16 0v7.500H7.500zM0 8.400h6.600v6.300L0 13.800zM7.500 8.400H16V16l-8.500-1.200z" /></svg>
      </TaskItem>
      <TaskSearch>
        <Glyph w={17} h={17} stroke="#222" strokeWidth="1.300"><circle cx="10.800" cy="6" r="5" /><path d="M7.200 9.600L.8 16" /></Glyph>
        Type here to search
      </TaskSearch>
      <TaskItem $w={48}><Glyph size={18} stroke="#000" strokeWidth="2"><circle cx="9" cy="9" r="6.900" /></Glyph></TaskItem>
      <TaskItem $w={47}>
        <Glyph w={18} h={16} stroke="#000" strokeWidth="1.200">
          <path d="M1.600 4.600h9.300v7H1.600zM1.600 0v2.300h9.300V0M1.600 16v-2.300h9.300V16M15.400 0v4M15.400 8v8" />
          <path fill="#000" stroke="none" d="M13.700 4.500H17v3.200h-3.300z" />
        </Glyph>
      </TaskItem>
      <TaskItem $w={54}>
        <svg width="22" height="19" viewBox="0 0 22 19">
          <path fill="#e3a21a" d="M0 1.500Q0 .5 1 .5h7.500L11 3v2H0z" />
          <path fill="#ffd35c" d="M0 3.500h21V17q0 1-1 1H1q-1 0-1-1z" />
          <path fill="#3a96dd" d="M4 18v-6.500Q4 10 5.500 10h10.800q1.500 0 1.500 1.500V18h-4v-4h-6v4z" />
        </svg>
      </TaskItem>
      <TaskItem $w={40} $ml={3} $open>
        <svg width="26" height="28" viewBox="0.500 0 26 28">
          <path fill="#e33b2e" d="M13 13L2.800 7.100A11.800 11.800 0 0 1 23.200 7.100H13z" />
          <path fill="#fcc31e" d="M13 13l5-5.900h5.200A11.800 11.800 0 0 1 13 24.800z" />
          <path fill="#2ba14b" d="M2.800 7.100l5.200 9 5 3.300-2.500 5.200A11.800 11.800 0 0 1 2.800 7.100z" />
          <circle cx="13" cy="13" r="6" fill="#fff" />
          <circle cx="13" cy="13" r="4.800" fill="#3a7ce8" />
          <circle cx="19" cy="19.300" r="7.200" fill="#dfe3e8" stroke="#8d97a3" strokeWidth=".8" />
          <circle cx="19" cy="16.500" r="2.500" fill="#44546a" />
          <path fill="#44546a" d="M14.200 23.500c0-4.500 9.600-4.500 9.600 0z" />
        </svg>
      </TaskItem>
      <TaskItem $w={48} $ml={5} $active $open>
        <svg width="24" height="24" viewBox="0 0 24 24">
          <path fill="#b8b8b8" d="M3 3h20v20H3z" />
          <path fill="#fbfbfb" d="M1 1h21v21H1z" />
          <g transform="translate(1.500 1.500)"><TableauMark size={20} colors={PALE_BLUES} /></g>
        </svg>
      </TaskItem>
      <Weather>
        <svg width="24" height="24" viewBox="0 0 24 24">
          <defs><linearGradient id="sun" x1="0" y1="0" x2="1" y2="1"><stop offset="0" stopColor="#f9b42c" /><stop offset="1" stopColor="#f26a10" /></linearGradient></defs>
          <circle cx="11" cy="13" r="10" fill="url(#sun)" />
          <circle cx="20" cy="4" r="3" fill="#c42b1c" />
        </svg>
        <Temperature>34°C</Temperature>Sunny
      </Weather>
      <TaskItem $w={22}><Glyph w={13} h={8} stroke="#111" strokeWidth="1.400"><path d="M1 7l5.500-5.500L12 7" /></Glyph></TaskItem>
      <TaskItem $w={24}>
        <Glyph w={17} h={17} stroke="#111" strokeWidth="1.300">
          <path d="M1 3.500L15.500 1v9M9 15.200L1 14zM1 3.500V14M5 9c0-4 5-4 6.500-1.500M11.500 5v2.500H9M5.500 11.500h3" />
          <circle cx="12.500" cy="13" r="3.700" fill="#e81123" stroke="none" />
        </Glyph>
      </TaskItem>
      <TaskItem $w={24}>
        <Glyph w={17} h={13} stroke="#111" strokeWidth="1.200">
          <path d="M6 3.500h9v7H5M15 5.500h1.500v3H15M2 0v2.500M4.500 0v2.500M1 2.500h4.500v2C5.500 7 1 7 1 4.500zM3.200 6.500v4.500" />
          <path fill="#111" stroke="none" d="M7 5h4v4H7z" />
        </Glyph>
      </TaskItem>
      <TaskItem $w={26}>
        <Glyph size={14} stroke="#222" strokeWidth="1.200">
          <path d="M1.500 13A11.500 11.500 0 0 1 13 1.500M4.500 13A8.500 8.500 0 0 1 13 4.500M7.500 13A5.500 5.500 0 0 1 13 7.500" />
          <circle cx="11.500" cy="11.700" r="1.700" fill="#222" stroke="none" />
        </Glyph>
      </TaskItem>
      <TaskItem $w={22}>
        <Glyph w={18} h={15} stroke="#111" strokeWidth="1.200">
          <path d="M1 5h2.500L7 1.500v12L3.500 10H1zM9.500 5.200q1.500 2.300 0 4.600M12 3.500q2.700 4 0 8M14.500 1.800q4 5.700 0 11.400" />
        </Glyph>
      </TaskItem>
      <Clock>7:10 PM{'\n'}4/10/2023</Clock>
      <TaskItem $w={50}>
        <svg width="26" height="26" viewBox="0 0 26 26">
          <path fill="#000" d="M1 2h16v12H8l-4 4v-4H1z" />
          <path stroke="#d5d5d5" strokeWidth="1.200" d="M3.500 5.500h11M3.500 8h11M3.500 10.500h8" />
          <circle cx="16.300" cy="16.800" r="8" fill="#d0d0d0" fillOpacity=".9" stroke="#777" />
          <text x="16.300" y="21.500" textAnchor="middle" fontSize="13" fontWeight="600" fill="#111" fontFamily={SEGOE}>1</text>
        </svg>
      </TaskItem>
      <DesktopEdge />
    </Taskbar>
  </>
);

export default function App() {
  return (
    <Screen>
      <GlobalStyle />
      <TopBars />
      <Workspace>
        <DataPanel />
        <Cards />
        <ViewArea />
      </Workspace>
      <BottomBars />
    </Screen>
  );
}
